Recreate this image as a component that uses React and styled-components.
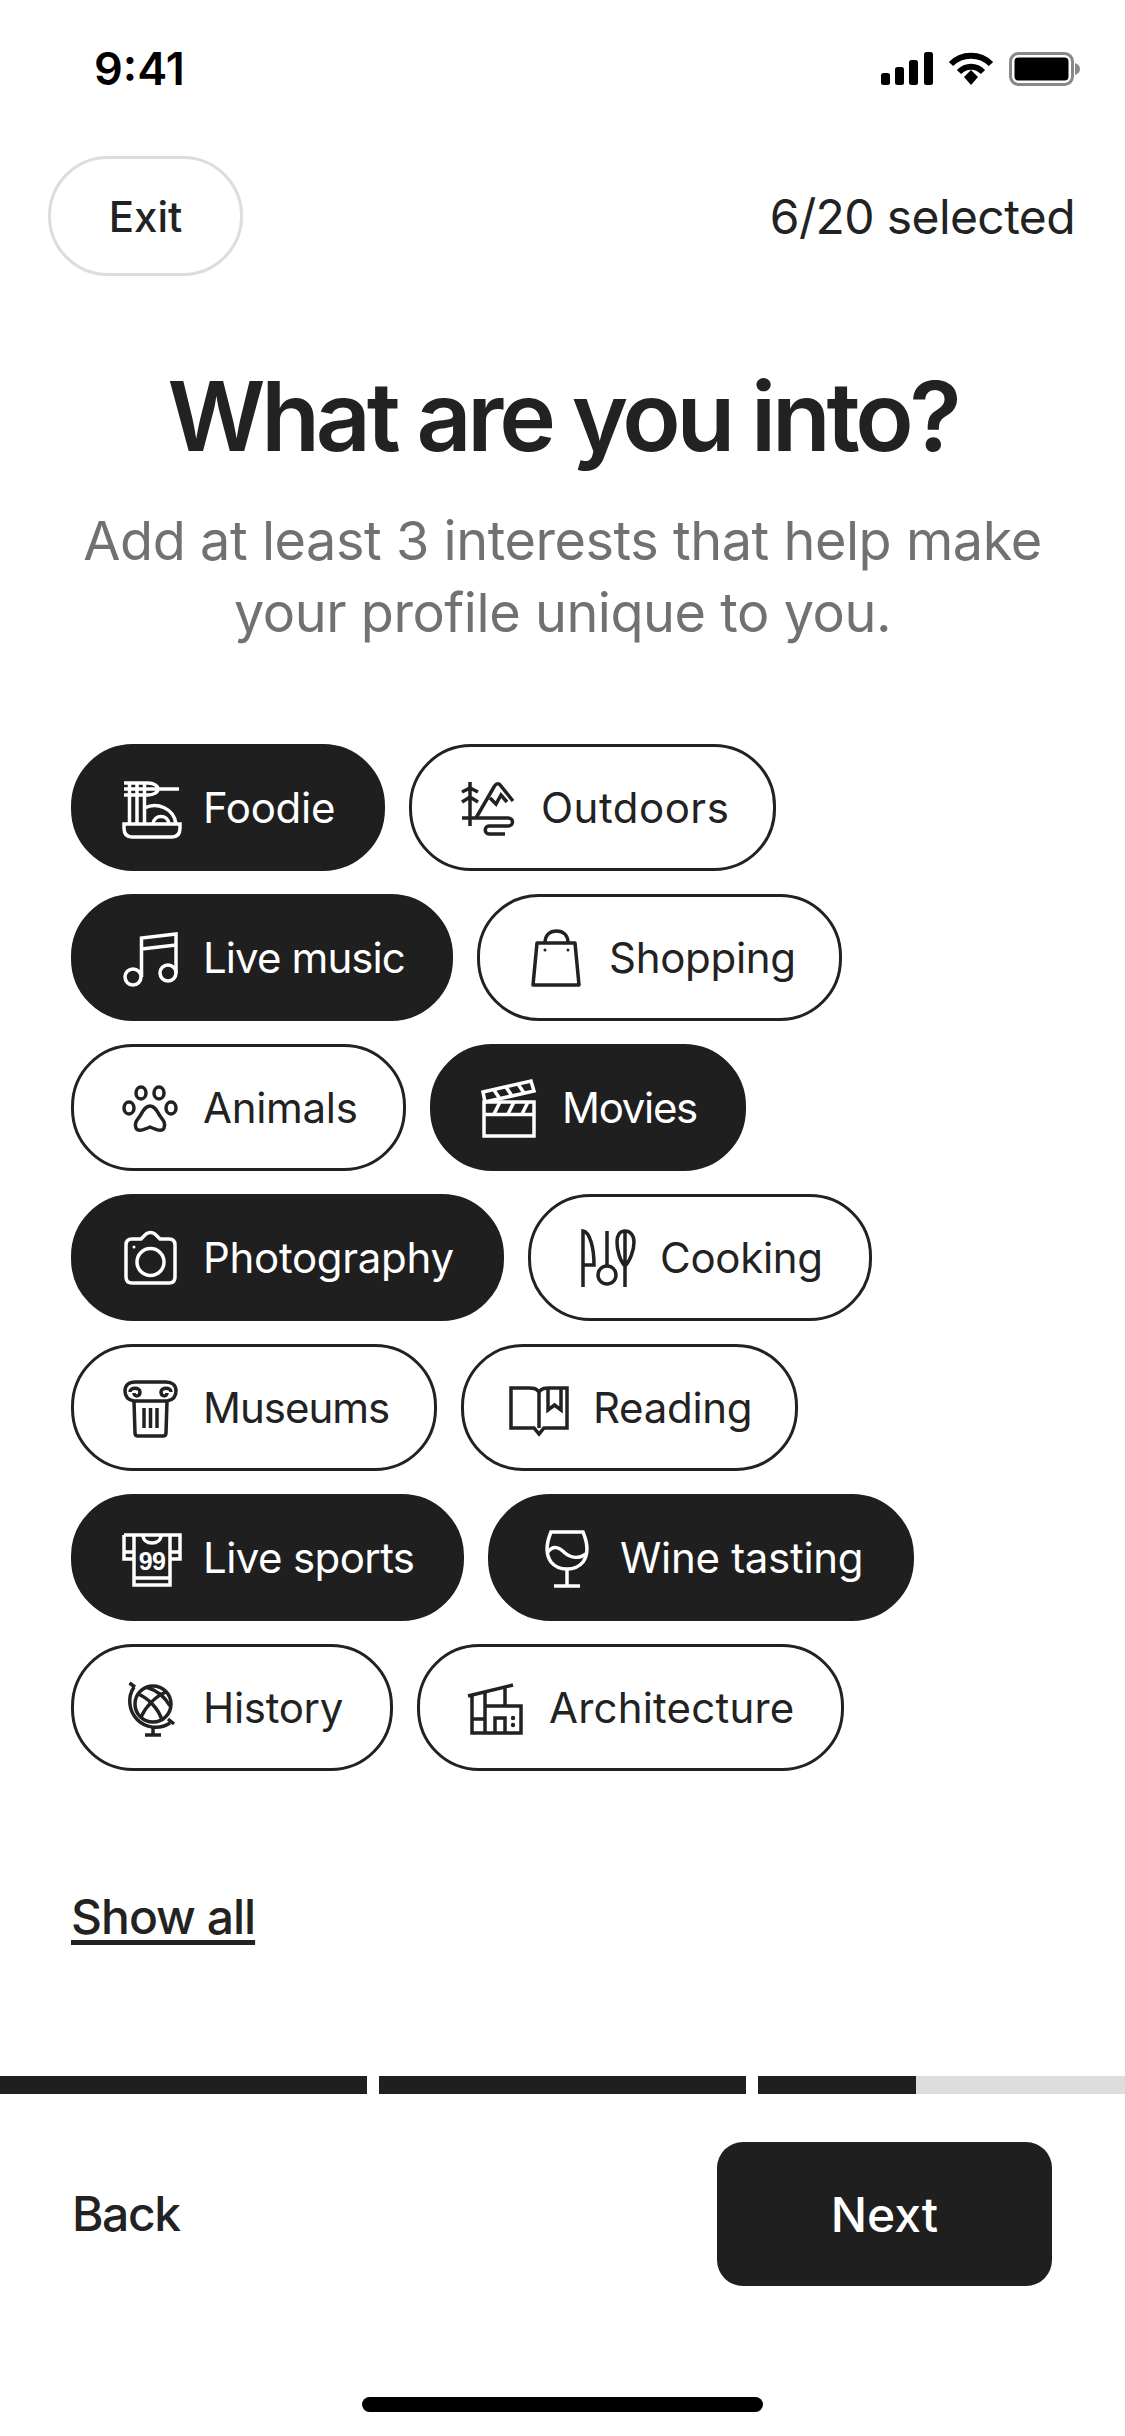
import React from 'react'
import styled, { createGlobalStyle } from 'styled-components'

const Global = createGlobalStyle`
  html, body {
    margin: 0;
    padding: 0;
    background: #fff;
  }
  * {
    box-sizing: border-box;
  }
`

const Page = styled.div`
  width: 1125px;
  height: 2436px;
  display: flex;
  flex-direction: column;
  overflow: hidden;
  background: #fff;
  color: #222;
  font-family: Inter, "Liberation Sans", sans-serif;
`

const StatusBar = styled.div`
  height: 156px;
  padding: 52px 44px 0 94px;
  display: flex;
  justify-content: space-between;
  align-items: flex-start;
`

const Time = styled.div`
  font-size: 45px;
  line-height: 34px;
  font-weight: 600;
  color: #000;
`

const StatusIcons = styled.div`
  display: flex;
  align-items: flex-start;
  gap: 15px;
`

const TopBar = styled.div`
  height: 120px;
  padding: 0 50px 0 48px;
  display: flex;
  justify-content: space-between;
  align-items: center;
`

const ExitButton = styled.div`
  width: 195px;
  height: 120px;
  border: 3px solid #ddd;
  border-radius: 60px;
  display: flex;
  align-items: center;
  justify-content: center;
  font-size: 42px;
  font-weight: 500;
`

const Counter = styled.div`
  font-size: 48px;
  letter-spacing: -0.6px;
`

const Title = styled.h1`
  margin: 85px 0 0;
  font-size: 96px;
  line-height: 110px;
  font-weight: 600;
  letter-spacing: -4.2px;
  text-align: center;
`

const Sub = styled.p`
  margin: 34px 0 0;
  font-size: 54px;
  line-height: 72px;
  font-weight: 400;
  letter-spacing: -0.45px;
  color: #717171;
  text-align: center;
`

const Chips = styled.div`
  margin-top: 95px;
  padding-left: 71px;
  display: flex;
  flex-direction: column;
  gap: 23px;
`

const ChipRow = styled.div`
  display: flex;
  gap: 24px;
`

const Chip = styled.div`
  width: ${p => p.$w}px;
  height: 127px;
  padding-left: 48px;
  border: 3px solid #222;
  border-radius: 62px;
  display: flex;
  align-items: center;
  gap: 21px;
  font-size: 42px;
  letter-spacing: ${p => p.$track ?? -0.3}px;
  white-space: nowrap;
  background: ${p => (p.$on ? '#1f1f1f' : '#fff')};
  border-color: ${p => (p.$on ? '#1f1f1f' : '#222')};
  color: ${p => (p.$on ? '#fff' : '#222')};

  svg {
    flex: none;
    overflow: visible;
  }
`

const ShowAll = styled.div`
  margin: 116px 0 0 71px;
  align-self: flex-start;
  font-size: 48px;
  line-height: 60px;
  font-weight: 500;
  letter-spacing: -1px;
  text-decoration: underline;
  text-decoration-thickness: 5px;
  text-underline-offset: 6px;
`

const Spacer = styled.div`
  flex: 1;
`

const Progress = styled.div`
  height: 18px;
  display: grid;
  grid-template-columns: 367px 367px 1fr;
  gap: 12px;
`

const Segment = styled.div`
  background: #ddd;
  overflow: hidden;
`

const SegmentFill = styled.div`
  height: 100%;
  background: #1f1f1f;
`

const Footer = styled.div`
  padding: 47px 73px 0 72px;
  display: flex;
  justify-content: space-between;
  align-items: center;
`

const BackLink = styled.div`
  font-size: 48px;
  font-weight: 500;
  letter-spacing: -1.4px;
`

const NextButton = styled.div`
  width: 335px;
  height: 144px;
  margin-top: 1px;
  border-radius: 26px;
  background: #1f1f1f;
  color: #fff;
  display: flex;
  align-items: center;
  justify-content: center;
  font-size: 48px;
  font-weight: 500;
`

const HomeRow = styled.div`
  height: 150px;
  padding-bottom: 24px;
  display: flex;
  justify-content: center;
  align-items: flex-end;
`

const HomeBar = styled.div`
  width: 401px;
  height: 15px;
  border-radius: 8px;
  background: #000;
`

const Icon = ({ children }) => (
  <svg width="60" height="60" viewBox="0 0 60 60" fill="none" stroke="currentColor" strokeWidth="3.5">
    {children}
  </svg>
)

const Foodie = () => (
  <Icon>
    <path d="M2 5H26C32 5 36 8 36 11C36 14 32 17 26 17H2M2 11H57M7.500 5V46M15 5V46M22.500 5V46" />
    <path d="M22.500 30C35 24 52 30 54 46M31 46C32 36 46 36 47 46" />
    <path d="M2 46H58V50C58 56 55 59 50 59H10C5 59 2 56 2 50Z" />
  </Icon>
)

const Outdoors = () => (
  <Icon>
    <path d="M10 4V48M2 14L10 10L18 14M2 24L10 19L18 24" />
    <path d="M16 40L34 9C36 5 39 5 41 8L53 23M30 20L36 26L41 17L47 24" />
    <path d="M2 40H48C54 40 54 48 48 48H29C24 48 24 56 29 56H45" />
  </Icon>
)

const LiveMusic = () => (
  <Icon>
    <circle cx="11" cy="49" r="8" />
    <circle cx="46" cy="45" r="8" />
    <path d="M19.500 49V10L54 6V45M19.500 21L54 17" />
  </Icon>
)

const Shopping = () => (
  <Icon>
    <path d="M9 15H47L51 57H5Z" strokeLinejoin="round" />
    <path d="M17 15C17 7 22 3 28.500 3C35 3 40 7 40 15" />
    <circle cx="17" cy="22" r="1.500" fill="currentColor" stroke="none" />
    <circle cx="40" cy="22" r="1.500" fill="currentColor" stroke="none" />
  </Icon>
)

const Animals = () => (
  <Icon>
    <ellipse cx="19" cy="15" rx="5" ry="6" />
    <ellipse cx="37" cy="15" rx="5" ry="6" />
    <ellipse cx="7" cy="30" rx="5" ry="6" />
    <ellipse cx="49" cy="30" rx="5" ry="6" />
    <path d="M28 28C33 28 35 33 38 38C41 42 44 45 42 50C40 54 35 52 28 49C21 52 16 54 14 50C12 45 15 42 18 38C21 33 23 28 28 28Z" />
  </Icon>
)

const Movies = () => (
  <Icon>
    <path d="M3 24H53V58H3ZM3 36.500H53" />
    <path d="M2 14L50 3L53 13L4 24Z" />
    <path d="M13 12L19 21M25 9L31 18M37 6L43 15M13 36L19 24M27 36L33 24M41 36L47 24" />
  </Icon>
)

const Photography = () => (
  <Icon>
    <path d="M10 11H19L24 6C27 4 30 4 33 6L38 11H47C51 11 53 13 53 17V49C53 53 51 55 47 55H10C6 55 4 53 4 49V17C4 13 6 11 10 11Z" />
    <circle cx="28.500" cy="34" r="13.500" />
    <circle cx="12" cy="19" r="1.500" fill="currentColor" stroke="none" />
  </Icon>
)

const Cooking = () => (
  <Icon>
    <path d="M4 59V3C11 4 15 20 15 37H4" />
    <path d="M28 3V38" />
    <circle cx="28" cy="47" r="9" />
    <path d="M46 3V59M46 38C41 33 38 22 38 14C38 7 41 3 46 3C51 3 55 7 55 14C55 22 51 33 46 38Z" />
  </Icon>
)

const Museums = () => (
  <Icon>
    <path d="M12 23C6 22 3 18 3 13C3 7 7 4 13 4H44C50 4 54 7 54 13C54 18 51 22 45 23Z" />
    <path d="M8 14C8 9 18 9 18 14C18 19 12 19 12 15M49 14C49 9 39 9 39 14C39 19 45 19 45 15" />
    <path d="M12 23L13 55C13 57 14 58 16 58H41C43 58 44 57 44 55L45 23" />
    <path d="M22 30V50M28.500 30V50M35 30V50" />
  </Icon>
)

const Reading = () => (
  <Icon>
    <path d="M27 14V50M27 14C24 10 21 10 17 10H-1V50H22L27 56L32 50H55V10H37C33 10 30 10 27 14" />
    <path d="M36 10V32L42.500 27L49 32V10" />
  </Icon>
)

const LiveSports = () => (
  <Icon>
    <path d="M12 7H48V57H12ZM2 7H58V31H48M12 31H2V7" />
    <path d="M2 24H12M48 24H58M12 50H48M21 7C21 12 25 15 30 15C35 15 39 12 39 7" />
    <text x="30" y="42" textAnchor="middle" fill="currentColor" stroke="none" fontSize="25" fontWeight="700" fontFamily="'Liberation Sans', sans-serif">99</text>
  </Icon>
)

const WineTasting = () => (
  <Icon>
    <path d="M12 4H44C49 16 49 27 44 34C40 39 34 41 28 41C22 41 16 39 12 34C7 27 7 16 12 4Z" />
    <path d="M28 41V58M15 58H41M9 24C14 17 20 19 26 25C32 30 40 31 47 26" />
  </Icon>
)

const History = () => (
  <Icon>
    <circle cx="31" cy="26" r="18" />
    <path d="M16 16C26 20 36 30 40 42M24 9C34 12 43 19 48 28" />
    <path d="M44 14C34 18 24 28 19 39" />
    <path d="M12 9A26 26 0 0 0 48 45M7.500 5L13 9M46 41L52 46M31 50V57M23 57H39" />
  </Icon>
)

const Architecture = () => (
  <Icon>
    <path d="M0 18L45 7M4 17V55H53V28H17M17 14V55M37 9V28M4 41H17M27 55V40H37V55" />
    <circle cx="45" cy="40" r="2.200" fill="currentColor" stroke="none" />
    <circle cx="45" cy="47" r="2.200" fill="currentColor" stroke="none" />
  </Icon>
)

const rows = [
  [
    { label: 'Foodie', w: 314, on: true, icon: Foodie },
    { label: 'Outdoors', w: 367, track: 0.5, icon: Outdoors }
  ],
  [
    { label: 'Live music', w: 382, on: true, track: -0.9, icon: LiveMusic },
    { label: 'Shopping', w: 365, icon: Shopping }
  ],
  [
    { label: 'Animals', w: 335, icon: Animals },
    { label: 'Movies', w: 316, on: true, track: -1.3, icon: Movies }
  ],
  [
    { label: 'Photography', w: 433, on: true, icon: Photography },
    { label: 'Cooking', w: 344, icon: Cooking }
  ],
  [
    { label: 'Museums', w: 366, track: -1, icon: Museums },
    { label: 'Reading', w: 337, icon: Reading }
  ],
  [
    { label: 'Live sports', w: 393, on: true, track: -0.6, icon: LiveSports },
    { label: 'Wine tasting', w: 426, on: true, icon: WineTasting }
  ],
  [
    { label: 'History', w: 322, icon: History },
    { label: 'Architecture', w: 427, track: 0.2, icon: Architecture }
  ]
]

const SignalIcon = () => (
  <svg width="52" height="33" viewBox="0 0 52 33" fill="#000">
    <rect x="0" y="21" width="9" height="12" rx="2.500" />
    <rect x="14" y="15" width="9" height="18" rx="2.500" />
    <rect x="28" y="8" width="9" height="25" rx="2.500" />
    <rect x="43" y="0" width="9" height="33" rx="2.500" />
  </svg>
)

const WifiIcon = () => (
  <svg width="46" height="34" viewBox="0 0 46 34" fill="none" stroke="#000" strokeWidth="6">
    <path d="M3 12C14 1 32 1 43 12" />
    <path d="M11 20C18 13 28 13 35 20" />
    <path d="M16 25L23 18L30 25L23 33Z" fill="#000" stroke="none" />
  </svg>
)

const BatteryIcon = () => (
  <svg width="72" height="34" viewBox="0 0 72 34">
    <rect x="1.500" y="1.500" width="62" height="31" rx="8" fill="none" stroke="#888" strokeWidth="3" />
    <rect x="5.500" y="5.500" width="54" height="23" rx="4" fill="#000" />
    <path d="M66 11C69 12 71 14 71 17C71 20 69 22 66 23Z" fill="#888" />
  </svg>
)

export default function App () {
  return (
    <Page>
      <Global />
      <StatusBar>
        <Time>9:41</Time>
        <StatusIcons>
          <SignalIcon />
          <WifiIcon />
          <BatteryIcon />
        </StatusIcons>
      </StatusBar>
      <TopBar>
        <ExitButton>Exit</ExitButton>
        <Counter>6/20 selected</Counter>
      </TopBar>
      <Title>What are you into?</Title>
      <Sub>
        Add at least 3 interests that help make
        <br />
        your profile unique to you.
      </Sub>
      <Chips>
        {rows.map((row, i) => (
          <ChipRow key={i}>
            {row.map(chip => (
              <Chip key={chip.label} $w={chip.w} $on={chip.on} $track={chip.track}>
                <chip.icon />
                {chip.label}
              </Chip>
            ))}
          </ChipRow>
        ))}
      </Chips>
      <ShowAll>Show all</ShowAll>
      <Spacer />
      <Progress>
        <SegmentFill />
        <SegmentFill />
        <Segment>
          <SegmentFill style={{ width: '43%' }} />
        </Segment>
      </Progress>
      <Footer>
        <BackLink>Back</BackLink>
        <NextButton>Next</NextButton>
      </Footer>
      <HomeRow>
        <HomeBar />
      </HomeRow>
    </Page>
  )
}
